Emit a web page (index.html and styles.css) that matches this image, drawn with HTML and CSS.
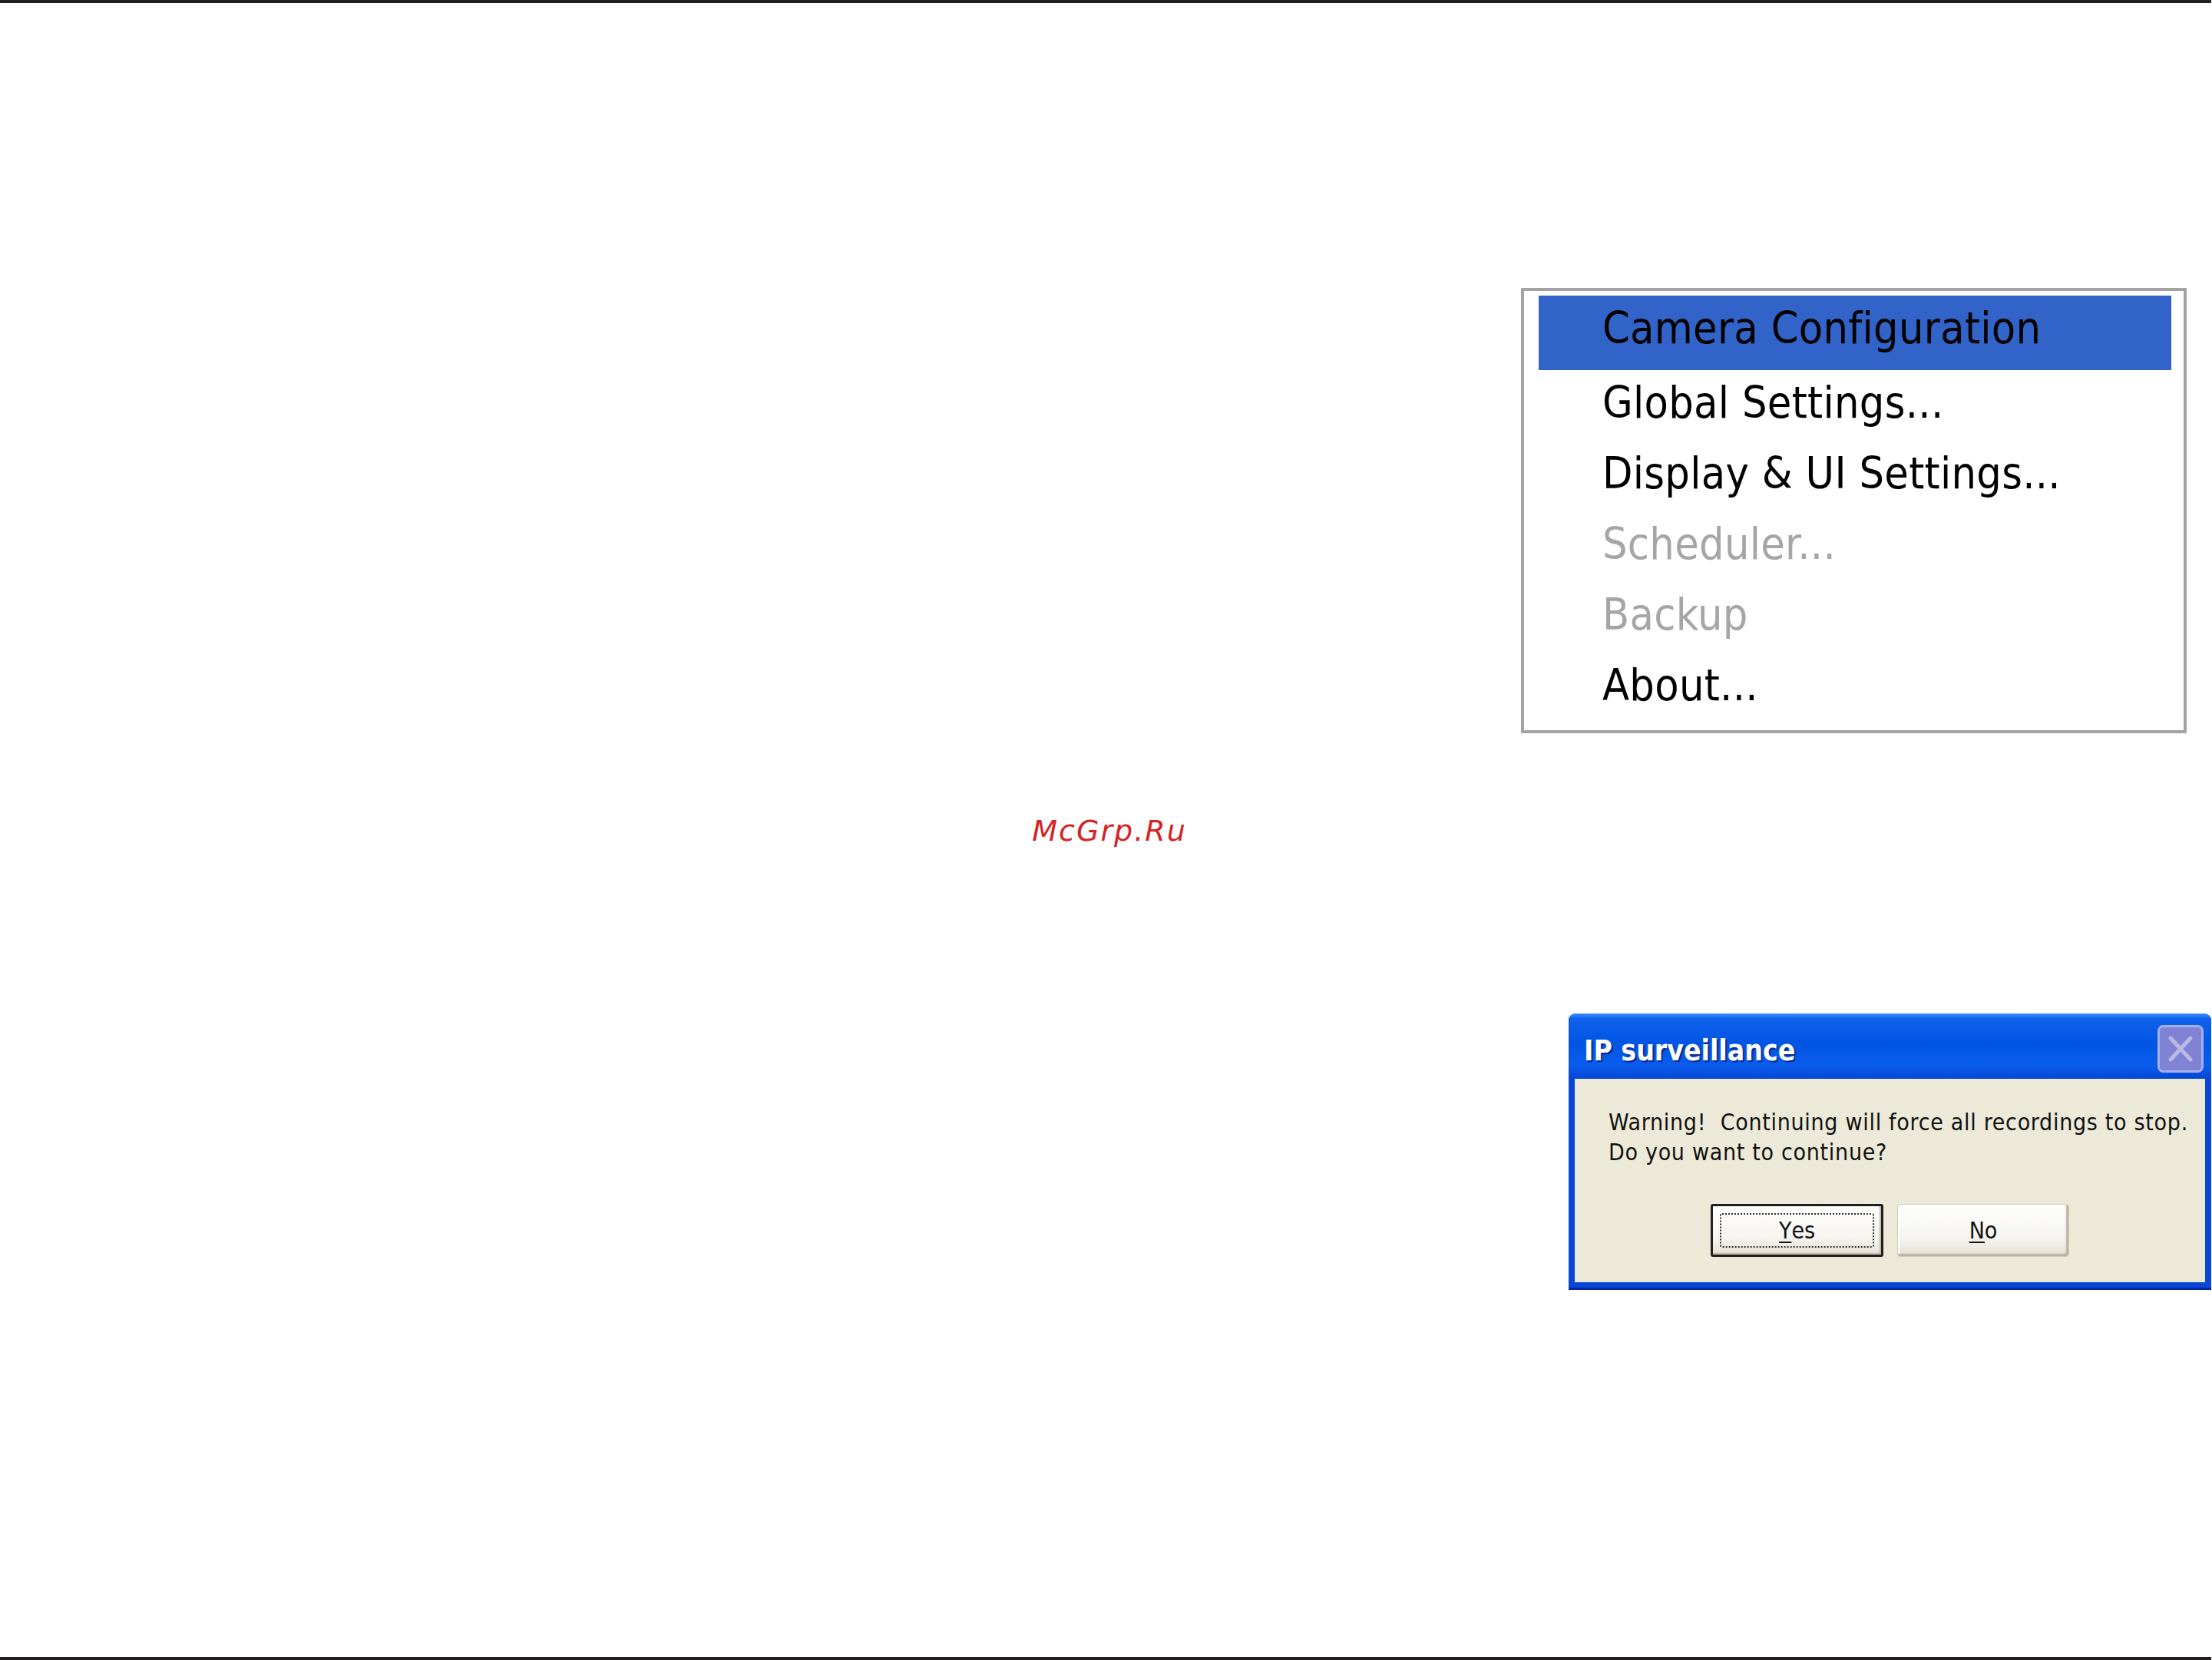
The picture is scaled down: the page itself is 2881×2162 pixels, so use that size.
FILE: index.html
```html
<!DOCTYPE html>
<html lang="en">
<head>
<meta charset="utf-8">
<title>IP surveillance - menu and warning</title>
<link rel="stylesheet" href="styles.css">
</head>
<body>
<div class="page">

	<div class="menu_fig">
		<ul class="popup_menu">
			<li class="menu_item selected first">Camera Configuration</li>
			<li class="menu_item">Global Settings...</li>
			<li class="menu_item">Display &amp; UI Settings...</li>
			<li class="menu_item disabled">Scheduler...</li>
			<li class="menu_item disabled">Backup</li>
			<li class="menu_item">About...</li>
		</ul>
	</div>

	<p class="watermark">McGrp.Ru</p>

	<div class="dialog_fig">
		<div class="dialog">
			<div class="title_bar">
				<span class="title_text">IP surveillance</span>
				<span class="close_btn">
					<svg width="60" height="62" viewBox="0 0 60 62">
						<rect x="1.5" y="1.5" width="57" height="59" rx="6" fill="#8083d4" stroke="#a3b1f0" stroke-width="3"/>
						<path d="M17 17 L43 45 M43 17 L17 45" stroke="#b9b8e6" stroke-width="5" stroke-linecap="round"/>
					</svg>
				</span>
			</div>
			<div class="dialog_body">
				<p class="message">Warning!&nbsp; Continuing will force all recordings to stop.<br>Do you want to continue?</p>
				<div class="buttons">
					<button class="xp_button default"><span class="focus_rect"><u>Y</u>es</span></button>
					<button class="xp_button"><u>N</u>o</button>
				</div>
			</div>
		</div>
	</div>

</div>
</body>
</html>
```

FILE: styles.css
```css
body {
	margin: 0;
	background: #fff;
}

.page {
	width: 2880px;
	height: 2162px;
	box-sizing: border-box;
	border-top: 4px solid #231f20;
	border-bottom: 4px solid #231f20;
	font-family: "DejaVu Sans Condensed", "Liberation Sans", sans-serif;
}

/* popup menu */
.menu_fig {
	padding: 371px 0 0 1981px;
}

.popup_menu {
	list-style: none;
	margin: 0;
	width: 867px;
	height: 580px;
	box-sizing: border-box;
	border: 4px solid #a3a3a3;
	padding: 6px 16px 9px 19px;
	background: #fff;
}

.menu_item {
	height: 92px;
	line-height: 84px;
	padding-left: 83px;
	font-size: 57px;
	letter-spacing: 0.3px;
	color: #000;
	white-space: nowrap;
}
.menu_item.first { height: 97px; }
.menu_item.selected { background: #3163c9; }
.menu_item.disabled { color: #a6a6a6; }

.watermark {
	margin: 105px 0 0 0;
	padding-left: 10px;
	text-align: center;
	font-family: "DejaVu Sans", sans-serif;
	font-style: oblique;
	font-size: 38px;
	line-height: 44px;
	letter-spacing: 2px;
	color: #d42323;
}

/* warning dialog */
.dialog_fig {
	margin-top: 216px;
	padding-left: 2043px;
}

.dialog {
	width: 837px;
	background: #0a46d8;
	border-radius: 9px 9px 0 0;
	overflow: hidden;
	padding-bottom: 10px;
	box-shadow: inset 0 -3px 0 #0026a0;
}

.title_bar {
	height: 85px;
	display: flex;
	justify-content: space-between;
	align-items: flex-start;
	padding: 0 10px 0 20px;
	background: linear-gradient(#3a8cfb 0%, #0f62ec 8%, #0055e5 45%, #0a5cec 80%, #0646d4 100%);
}

.title_text {
	padding-top: 17px;
	line-height: 64px;
	font-size: 37px;
	font-weight: bold;
	color: #fff;
	text-shadow: 2px 2px 1px #0b2a8a;
}

.close_btn {
	margin-top: 15px;
	width: 60px;
	height: 62px;
}
.close_btn svg { display: block; }

.dialog_body {
	margin: 0 8px;
	background: #ece9d8;
	padding: 37px 0 33px 0;
}

.message {
	margin: 0;
	padding-left: 44px;
	font-size: 30px;
	line-height: 39px;
	letter-spacing: 0.7px;
	color: #111;
}

.buttons {
	margin-top: 48px;
	display: flex;
	justify-content: center;
	gap: 18px;
}

.xp_button {
	width: 224px;
	height: 69px;
	box-sizing: border-box;
	padding: 0;
	font-family: inherit;
	font-size: 30px;
	color: #111;
	border: 1px solid #cfccbd;
	border-radius: 4px;
	background: linear-gradient(#fffffd, #f5f4ef 65%, #e4e1d3);
	box-shadow: inset -3px -3px 2px #b5b2a0, inset 2px 2px 1px #fff;
}

.xp_button.default {
	width: 225px;
	padding: 9px;
	border: 3px solid #1f1f1f;
	border-radius: 3px;
	box-shadow: inset -2px -2px 2px #b9b6a5;
}

.focus_rect {
	display: flex;
	align-items: center;
	justify-content: center;
	height: 100%;
	box-sizing: border-box;
	border: 2px dotted #333;
	border-radius: 3px;
}

.xp_button u {
	text-decoration-thickness: 2px;
	text-underline-offset: 4px;
}
```
